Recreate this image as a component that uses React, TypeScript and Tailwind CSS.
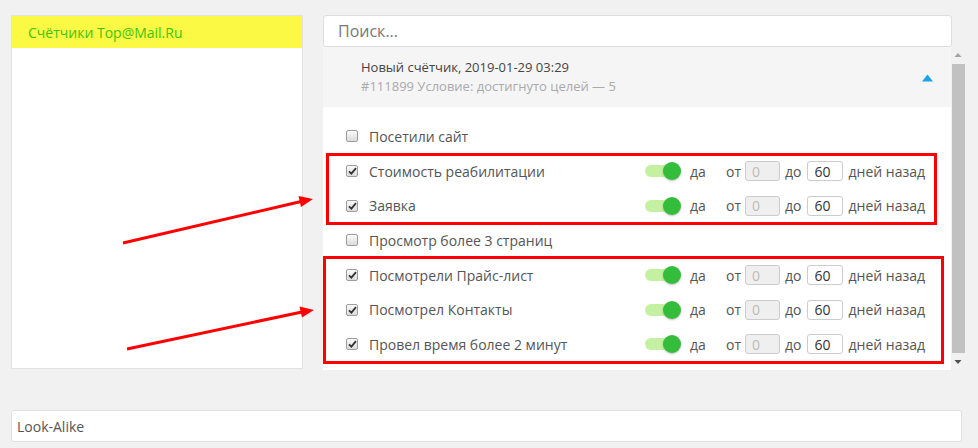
import React from "react";

// ─────────────────────────────────────────────────────────────
// Data
// ─────────────────────────────────────────────────────────────

interface Goal {
  name: string;
  checked: boolean;
}

const goals: Goal[] = [
  { name: "Посетили сайт", checked: false },
  { name: "Стоимость реабилитации", checked: true },
  { name: "Заявка", checked: true },
  { name: "Просмотр более 3 страниц", checked: false },
  { name: "Посмотрели Прайс-лист", checked: true },
  { name: "Посмотрел Контакты", checked: true },
  { name: "Провел время более 2 минут", checked: true },
];

const font = { fontFamily: '"Open Sans", "Liberation Sans", sans-serif' };

// ─────────────────────────────────────────────────────────────
// Small parts
// ─────────────────────────────────────────────────────────────

function Checkbox({ checked }: { checked: boolean }) {
  return (
    <span className="flex h-[12px] w-[12px] items-center justify-center rounded-[2px] border border-[#9d9d9d] bg-gradient-to-b from-[#fafafa] to-[#dcdcdc]">
      {checked && (
        <svg width="9" height="8" viewBox="0 0 9 8">
          <path d="M1 4.3 L3.4 6.6 L8 1.2" fill="none" stroke="#333" strokeWidth="1.8" />
        </svg>
      )}
    </span>
  );
}

function Toggle() {
  return (
    <span className="relative flex h-[18px] w-[36px] items-center">
      <span className="h-[12px] w-[32px] rounded-full bg-[#c4f0a2]" />
      <span className="absolute right-0 top-0 h-[18px] w-[18px] rounded-full bg-[#33bd3b] shadow-[0_1px_2px_rgba(0,0,0,0.25)]" />
    </span>
  );
}

function GoalRow({ goal }: { goal: Goal }) {
  return (
    <div className="flex h-[34.7px] items-center pl-[23px] text-[14px] text-[#555]">
      <Checkbox checked={goal.checked} />
      <span className="ml-[11px] w-[276px]">{goal.name}</span>
      {goal.checked && (
        <div className="flex items-center">
          <Toggle />
          <span className="ml-[9px] w-[36px]">да</span>
          <span>от</span>
          <span className="ml-[4px] flex h-[20px] w-[35px] items-center rounded-[3px] border border-[#ccc] bg-[#efefef] pl-[6px] text-[#bbb]">
            0
          </span>
          <span className="ml-[5px]">до</span>
          <span className="ml-[6px] flex h-[20px] w-[36px] items-center rounded-[3px] border border-[#ccc] bg-white pl-[6px] text-[#333]">
            60
          </span>
          <span className="ml-[5px]">дней назад</span>
        </div>
      )}
    </div>
  );
}

function Scrollbar() {
  return (
    <div className="flex w-[14px] flex-col items-center bg-[#f1f1f1]">
      <svg width="8" height="17" viewBox="0 0 8 17" className="shrink-0">
        <path d="M0.5 10 L4 6 L7.5 10 Z" fill="#a3a3a3" />
      </svg>
      <div className="w-[13px] flex-1 bg-[#c1c1c1]" />
      <svg width="8" height="17" viewBox="0 0 8 17" className="shrink-0">
        <path d="M0.5 7 L4 11 L7.5 7 Z" fill="#505050" />
      </svg>
    </div>
  );
}

// ─────────────────────────────────────────────────────────────
// Page
// ─────────────────────────────────────────────────────────────

export default function App() {
  return (
    <div className="relative h-[448px] w-[978px] overflow-hidden bg-[#f1f1f1]" style={font}>
      <div className="flex pl-[11px] pt-[15px]">
        {/* Left list */}
        <div className="h-[354px] w-[292px] border border-[#e2e2e2] bg-white">
          <div className="flex h-[32px] items-center bg-[#fcf944] pl-[16px] text-[14px] text-[#3cc50c]">
            Счётчики Top@Mail.Ru
          </div>
        </div>

        {/* Right column */}
        <div className="ml-[20px] flex flex-col">
          <div className="flex h-[32px] w-[629px] items-center rounded-[3px] border border-[#dedede] bg-white pl-[14px] text-[16px] text-[#777]">
            Поиск...
          </div>
          <div className="flex h-[323px]">
            <div className="w-[628px] overflow-hidden bg-white">
              <div className="flex h-[60px] items-center justify-between bg-[#f5f5f5] pl-[38px] pr-[18px]">
                <div className="flex flex-col leading-[19px]">
                  <span className="text-[13px] text-[#444]">Новый счётчик, 2019-01-29 03:29</span>
                  <span className="text-[13px] text-[#aaa]">#111899 Условие: достигнуто целей — 5</span>
                </div>
                <svg width="11" height="8" viewBox="0 0 11 8" className="mt-[1px]">
                  <path d="M0 7.5 L5.5 0.5 L11 7.5 Z" fill="#1ba3e6" />
                </svg>
              </div>
              <div className="pt-[12px]">
                {goals.map((g) => (
                  <GoalRow key={g.name} goal={g} />
                ))}
              </div>
            </div>
            <Scrollbar />
          </div>
        </div>
      </div>

      {/* Look-Alike */}
      <div className="ml-[11px] mt-[40px] flex h-[32px] w-[951px] items-center rounded-[3px] border border-[#e0e0e0] bg-white pl-[5px] text-[14px] text-[#555]">
        Look-Alike
      </div>

      {/* Annotations */}
      <div className="pointer-events-none absolute left-[326px] top-[153px] h-[72px] w-[611px] border-[3px] border-[#ff0000]" />
      <div className="pointer-events-none absolute left-[323px] top-[256px] h-[108px] w-[621px] border-[3px] border-[#ff0000]" />
      <svg className="pointer-events-none absolute left-0 top-0" width="978" height="448">
        <line x1="123" y1="243" x2="301" y2="201.5" stroke="#ff0000" strokeWidth="3" />
        <path d="M313 199 L298.5 196 L301 207 Z" fill="#ff0000" />
        <line x1="127" y1="349" x2="302" y2="312" stroke="#ff0000" strokeWidth="3" />
        <path d="M314 310 L299.5 306.5 L302 317.5 Z" fill="#ff0000" />
      </svg>
    </div>
  );
}
